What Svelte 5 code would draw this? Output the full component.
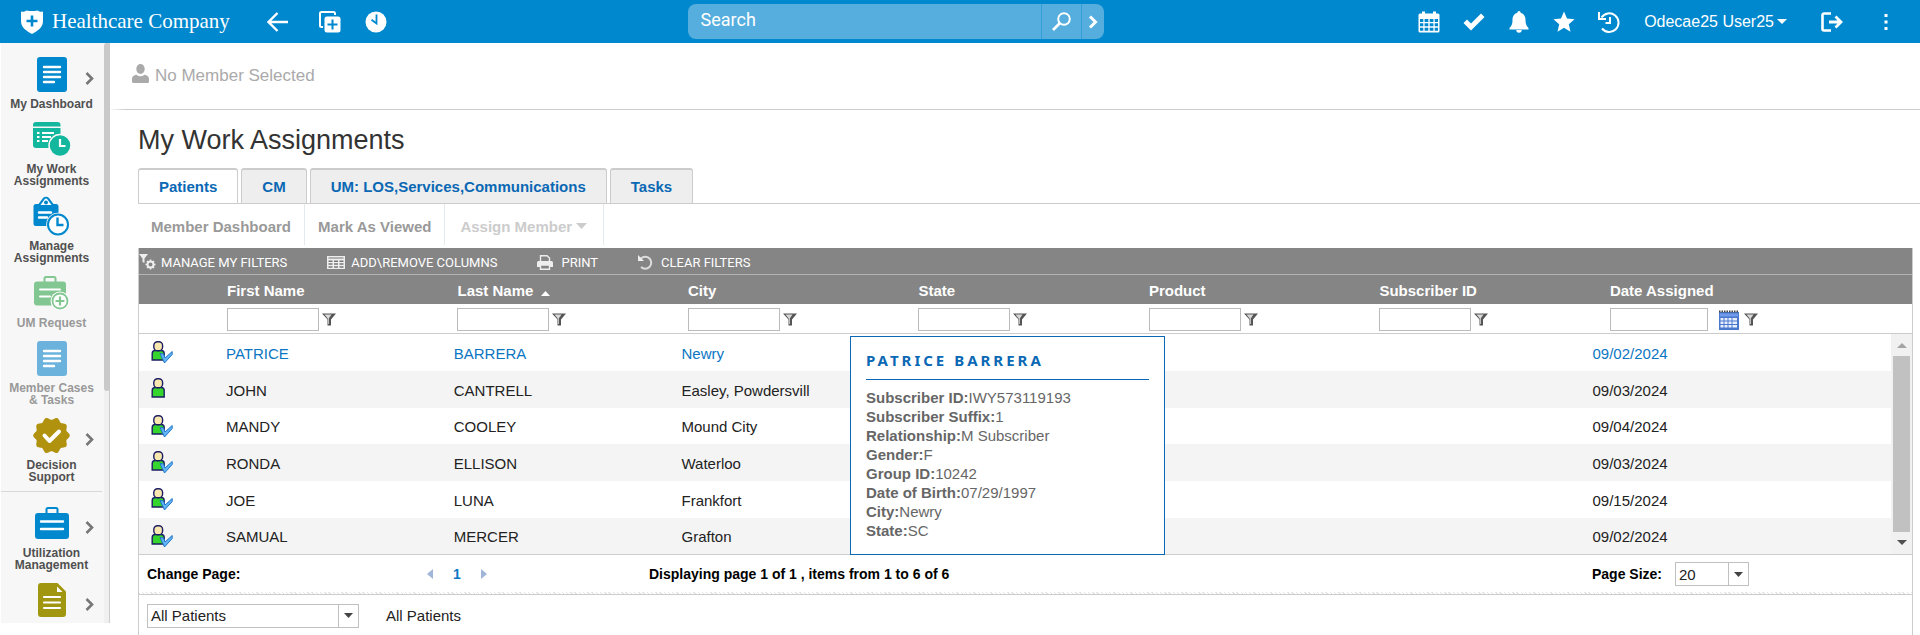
<script>
  const scallop = (() => {
    let d = '';
    for (let i = 0; i < 120; i++) {
      const t = (i / 120) * Math.PI * 2;
      const r = 17 + 1.3 * Math.cos(10 * t + Math.PI);
      d += (i ? 'L' : 'M') + (18.5 + r * Math.sin(t)).toFixed(2) + ' ' + (18.5 - r * Math.cos(t)).toFixed(2);
    }
    return d + 'Z';
  })();

  const nav = [
    { icon: 'doc', lines: ['My Dashboard'], more: true },
    { icon: 'work', lines: ['My Work', 'Assignments'] },
    { icon: 'manage', lines: ['Manage', 'Assignments'] },
    { icon: 'request', lines: ['UM Request'], dim: true },
    { icon: 'docdim', lines: ['Member Cases', '& Tasks'], dim: true },
    { icon: 'badge', lines: ['Decision', 'Support'], more: true },
    { icon: 'case', lines: ['Utilization', 'Management'], more: true, divided: true },
    { icon: 'note', lines: [], name: 'Documents', more: true }
  ];

  const tabs = ['Patients', 'CM', 'UM: LOS,Services,Communications', 'Tasks'];
  let active = $state(0);

  const columns = ['First Name', 'Last Name', 'City', 'State', 'Product', 'Subscriber ID', 'Date Assigned'];

  const rows = [
    { first: 'PATRICE', last: 'BARRERA', city: 'Newry', date: '09/02/2024', checked: true, current: true },
    { first: 'JOHN', last: 'CANTRELL', city: 'Easley, Powdersvill', date: '09/03/2024', checked: false },
    { first: 'MANDY', last: 'COOLEY', city: 'Mound City', date: '09/04/2024', checked: true },
    { first: 'RONDA', last: 'ELLISON', city: 'Waterloo', date: '09/03/2024', checked: true },
    { first: 'JOE', last: 'LUNA', city: 'Frankfort', date: '09/15/2024', checked: true },
    { first: 'SAMUAL', last: 'MERCER', city: 'Grafton', date: '09/02/2024', checked: true }
  ];

  const details = [
    ['Subscriber ID', 'IWY573119193'],
    ['Subscriber Suffix', '1'],
    ['Relationship', 'M Subscriber'],
    ['Gender', 'F'],
    ['Group ID', '10242'],
    ['Date of Birth', '07/29/1997'],
    ['City', 'Newry'],
    ['State', 'SC']
  ];
</script>

{#snippet docIcon(color)}
  <svg width="30" height="35" viewBox="0 0 30 35">
    <rect width="30" height="35" rx="3" fill={color} />
    <path d="M7 10h16M7 15h16M7 20h16M7 25h10" stroke="#fff" stroke-width="2.4" stroke-linecap="round" />
  </svg>
{/snippet}

{#snippet navIcon(name)}
  {#if name === 'doc'}
    {@render docIcon('#0088ce')}
  {:else if name === 'docdim'}
    {@render docIcon('#6bb3dc')}
  {:else if name === 'work'}
    <svg width="38" height="34" viewBox="0 0 38 34">
      <path d="M0 4.5V3a3 3 0 0 1 3-3h21.500a3 3 0 0 1 3 3v1.500z" fill="#13b79e" />
      <path d="M0 6h27.500v20H3a3 3 0 0 1-3-3z" fill="#13b79e" />
      <path d="M4 11h2.500M4 15h2.500M4 19h2.500M9 11h12M9 15h9M9 19h6" stroke="#fff" stroke-width="1.800" />
      <circle cx="27" cy="23.500" r="11" fill="#13b79e" stroke="#f7f7f7" stroke-width="1.500" />
      <path d="M27 17v7h5.500" fill="none" stroke="#fff" stroke-width="2.200" />
    </svg>
  {:else if name === 'manage'}
    <svg width="37" height="40" viewBox="0 0 37 40">
      <path d="M3 8h2.500L10 2a4 4 0 0 1 6 0L20.500 8H23a2.500 2.500 0 0 1 2.500 2.500V30H3a2.500 2.500 0 0 1-2.500-2.500v-17A2.500 2.500 0 0 1 3 8z" fill="#0088ce" />
      <path d="M7.500 9l4-5.600a2 2 0 0 1 3 0l4 5.600z" fill="#fff" />
      <circle cx="13" cy="6.500" r="2" fill="#0088ce" />
      <path d="M6 16.500h12M6 21.500h8" stroke="#fff" stroke-width="2.400" stroke-linecap="round" />
      <circle cx="25" cy="28.500" r="11.800" fill="#f7f7f7" />
      <circle cx="25" cy="28.500" r="10" fill="#fff" stroke="#0088ce" stroke-width="2" />
      <path d="M24.500 21.500v7.500h6" fill="none" stroke="#0088ce" stroke-width="2.400" />
    </svg>
  {:else if name === 'request'}
    <svg width="35" height="34" viewBox="0 0 35 34">
      <path d="M10.500 6V2.500a1.500 1.500 0 0 1 1.500-1.500h8a1.500 1.500 0 0 1 1.500 1.500V6" fill="none" stroke="#82c792" stroke-width="2" />
      <rect y="5.500" width="32" height="24" rx="3" fill="#82c792" />
      <path d="M6 13.500h20M6 20.500h10" stroke="#fff" stroke-width="2" stroke-linecap="round" />
      <circle cx="26" cy="25" r="9.500" fill="#fff" />
      <circle cx="26" cy="25" r="7.500" fill="#fff" stroke="#82c792" stroke-width="1.800" />
      <path d="M26 20.500v9M21.500 25h9" stroke="#82c792" stroke-width="2.200" />
    </svg>
  {:else if name === 'badge'}
    <svg width="37" height="37" viewBox="0 0 37 37">
      <path d={scallop} fill="#b0920f" />
      <path d="M11.500 18.500l5 5.500 9.500-9.500" fill="none" stroke="#fff" stroke-width="4" stroke-linecap="round" stroke-linejoin="round" />
    </svg>
  {:else if name === 'case'}
    <svg width="34" height="32" viewBox="0 0 34 32">
      <path d="M11.500 6V2.500a1.500 1.500 0 0 1 1.500-1.500h8a1.500 1.500 0 0 1 1.500 1.500V6" fill="none" stroke="#0088ce" stroke-width="2" />
      <rect y="6" width="34" height="26" rx="3" fill="#0088ce" />
      <path d="M6 14.500h22M6 22h22" stroke="#fff" stroke-width="2.400" stroke-linecap="round" />
    </svg>
  {:else}
    <svg width="28" height="34" viewBox="0 0 28 34">
      <path d="M3 0h16.500L28 8.500V31a3 3 0 0 1-3 3H3a3 3 0 0 1-3-3V3a3 3 0 0 1 3-3z" fill="#a0960f" />
      <path d="M19 3.500v5.500h5.500z" fill="#fff" />
      <path d="M6 14h16M6 19.500h16M6 25h16" stroke="#fff" stroke-width="2.200" stroke-linecap="round" />
    </svg>
  {/if}
{/snippet}

{#snippet funnel()}
  <svg width="14" height="13" viewBox="0 0 14 13">
    <path d="M0 .500h14L9 6.500V12.500H5.500V6.500z" fill="#555" />
    <path d="M2.500 1.500h7L6.800 5.500v5.500H6V6z" fill="#d8d8d8" />
  </svg>
{/snippet}

<div class="page">
  <header class="top">
    <a class="brand" href="#home">
      <svg width="22" height="24" viewBox="0 0 22 24">
        <path d="M0 1.500Q3 2.200 5.500 0.500Q11 1.500 16.500 0.500Q19 2.200 22 1.500V11C22 17.500 17 20.500 11 24C5 20.500 0 17.500 0 11z" fill="#fff" />
        <path d="M11 5.500v11M5.500 11h11" stroke="#0088ce" stroke-width="2.600" />
      </svg>
      <span>Healthcare Company</span>
    </a>
    <div class="quick">
      <button aria-label="Back">
        <svg width="22" height="22" viewBox="0 0 22 22"><path d="M10.500 2L1.500 11l9 9M2 11h19" fill="none" stroke="#fff" stroke-width="2.400" /></svg>
      </button>
      <button aria-label="New window">
        <svg width="22" height="22" viewBox="0 0 22 22">
          <path d="M4 16H2.500A1.500 1.500 0 0 1 1 14.500v-12A1.500 1.500 0 0 1 2.500 1h12A1.500 1.500 0 0 1 16 2.500V4" fill="none" stroke="#fff" stroke-width="2" />
          <rect x="5.500" y="5.500" width="16" height="16" rx="2.500" fill="#fff" />
          <path d="M13.500 8.500v10M8.500 13.500h10" stroke="#0088ce" stroke-width="2" />
        </svg>
      </button>
      <button aria-label="Recent">
        <svg width="22" height="22" viewBox="0 0 22 22">
          <circle cx="11" cy="11" r="10.500" fill="#fff" />
          <path d="M11.500 3.500v9L6.500 8.800" fill="none" stroke="#0088ce" stroke-width="1.800" />
        </svg>
      </button>
    </div>
    <div class="search">
      <input type="text" placeholder="Search" aria-label="Search" />
      <button class="find" aria-label="Run search">
        <svg width="19" height="19" viewBox="0 0 19 19"><circle cx="12" cy="7" r="5.800" fill="none" stroke="#fff" stroke-width="2" /><path d="M8 11l-7 7" stroke="#fff" stroke-width="2.600" /></svg>
      </button>
      <button class="adv" aria-label="Advanced search">
        <svg width="10" height="14" viewBox="0 0 10 14"><path d="M2 1.500L7.500 7 2 12.500" fill="none" stroke="#fff" stroke-width="3" /></svg>
      </button>
    </div>
    <div class="tools">
      <button aria-label="Calendar">
        <svg width="22" height="22" viewBox="0 0 22 22">
          <path d="M2 2.500h2V.500h3v2h8V.500h3v2h2a1.500 1.500 0 0 1 1.500 1.500v16a1.500 1.500 0 0 1-1.500 1.500H2A1.500 1.500 0 0 1 .500 20V4A1.500 1.500 0 0 1 2 2.500z" fill="#fff" />
          <path d="M2 8h3.300v3H2zM6.600 8h3.700v3H6.600zM11.700 8h3.700v3h-3.700zM16.700 8H20v3h-3.300zM2 12.300h3.300v3H2zM6.600 12.300h3.700v3H6.600zM11.700 12.300h3.700v3h-3.700zM16.700 12.300H20v3h-3.300zM2 16.800h3.300v3H2zM6.600 16.800h3.700v3H6.600zM11.700 16.800h3.700v3h-3.700zM16.700 16.800H20v3h-3.300z" fill="#0088ce" />
        </svg>
      </button>
      <button aria-label="Tasks done">
        <svg width="22" height="22" viewBox="0 0 22 22"><path d="M.500 12l3.500-3.500 4 4L18 2.500 21.500 6 8 19.500z" fill="#fff" /></svg>
      </button>
      <button aria-label="Notifications">
        <svg width="22" height="22" viewBox="0 0 22 22">
          <path d="M11 0a1.600 1.600 0 0 1 1.600 1.700C16 2.500 17.500 5.500 17.500 9c0 4 1 6 3 8v1.500H1.500V17c2-2 3-4 3-8 0-3.500 1.500-6.500 4.900-7.300A1.600 1.600 0 0 1 11 0z" fill="#fff" />
          <path d="M8.300 19h5.400a2.700 2.700 0 0 1-5.400 0z" fill="#fff" />
        </svg>
      </button>
      <button aria-label="Favorites">
        <svg width="22" height="22" viewBox="0 0 22 22"><path d="M11 .500l3 7 7.500.700-5.700 5 1.700 7.500L11 16.800l-6.500 3.900 1.700-7.500-5.700-5L8 7.500z" fill="#fff" /></svg>
      </button>
      <button aria-label="History">
        <svg width="22" height="22" viewBox="0 0 22 22">
          <path d="M3.500 6.500A9.300 9.300 0 1 1 4 17.500" fill="none" stroke="#fff" stroke-width="2" />
          <path d="M1 1v7h7" fill="none" stroke="#fff" stroke-width="2" />
          <path d="M12 6v6H7.500" fill="none" stroke="#fff" stroke-width="2" />
        </svg>
      </button>
    </div>
    <button class="user">Odecae25 User25<svg width="10" height="5" viewBox="0 0 10 5"><path d="M0 0h10L5 5z" fill="#fff" /></svg></button>
    <button class="exit" aria-label="Sign out">
      <svg width="22" height="20" viewBox="0 0 22 20">
        <path d="M10 1.500H3A1.500 1.500 0 0 0 1.500 3v14A1.500 1.500 0 0 0 3 18.500h7" fill="none" stroke="#fff" stroke-width="2.600" />
        <path d="M8 10h12M14.500 4.500L20 10l-5.500 5.500" fill="none" stroke="#fff" stroke-width="2.800" />
      </svg>
    </button>
    <button class="dots" aria-label="More">
      <svg width="4" height="18" viewBox="0 0 4 18"><path d="M.500 1h3v3h-3zM.500 7.500h3v3h-3zM.500 14h3v3h-3z" fill="#fff" /></svg>
    </button>
  </header>

  <div class="body">
    <nav class="side">
      <div class="items">
        {#each nav as item}
          {#if item.divided}<hr />{/if}
          <a class="item" class:dim={item.dim} href="#nav" aria-label={item.name}>
            <span class="pic">
              {@render navIcon(item.icon)}
              {#if item.more}
                <svg class="more" width="9" height="13" viewBox="0 0 9 13"><path d="M1.500 1L7 6.500 1.500 12" fill="none" stroke="#777" stroke-width="2.600" /></svg>
              {/if}
            </span>
            {#each item.lines as line}<span class="label">{line}</span>{/each}
          </a>
        {/each}
      </div>
      <div class="rail"><div class="railthumb"></div></div>
    </nav>

    <main>
      <div class="member">
        <svg width="17" height="19" viewBox="0 0 17 19">
          <ellipse cx="8.500" cy="5" rx="4.200" ry="5" fill="#aaa" />
          <path d="M0 17.500V15c0-2.500 2-4 4.500-4.300a6 6 0 0 0 8 0C15 11 17 12.500 17 15v2.500a1.500 1.500 0 0 1-1.500 1.500h-14A1.500 1.500 0 0 1 0 17.500z" fill="#aaa" />
        </svg>
        <span>No Member Selected</span>
      </div>

      <div class="content">
        <h1>My Work Assignments</h1>
        <div class="tabs" role="tablist">
          {#each tabs as tab, i}
            <button role="tab" class:on={active === i} aria-selected={active === i} onclick={() => (active = i)}>{tab}</button>
          {/each}
        </div>
        <div class="actions">
          <button>Member Dashboard</button>
          <button>Mark As Viewed</button>
          <button class="off">Assign Member<svg width="11" height="6" viewBox="0 0 11 6"><path d="M0 0h11L5.500 6z" fill="#ccc" /></svg></button>
        </div>

        <section class="grid">
          <div class="bar">
            <button class="manage">
              <svg width="17" height="17" viewBox="0 0 17 17">
                <path d="M0 0h9L5.500 4.500V9L3.500 8V4.500z" fill="#eee" />
                <circle cx="11.500" cy="10.500" r="3" fill="none" stroke="#eee" stroke-width="2" />
                <path d="M11.500 5.500v2M11.500 13.500v2M6.500 10.500h2M14.500 10.500h2M8 7l1.400 1.400M13.600 12.600L15 14M15 7l-1.400 1.400M9.400 12.600L8 14" stroke="#eee" stroke-width="1.600" />
              </svg>MANAGE MY FILTERS
            </button>
            <button>
              <svg width="18" height="13" viewBox="0 0 18 13">
                <path d="M0 0h18v13H0z" fill="#eee" />
                <path d="M1.500 4.500h4v1.500h-4zM7 4.500h4v1.500H7zM12.500 4.500h4v1.500h-4zM1.500 7.300h4v1.500h-4zM7 7.300h4v1.500H7zM12.500 7.300h4v1.500h-4zM1.500 10.200h4v1.500h-4zM7 10.200h4v1.500H7zM12.500 10.200h4v1.500h-4z" fill="#777" />
                <path d="M1.500 2h15" stroke="#777" stroke-width="1" />
              </svg>ADD\REMOVE COLUMNS
            </button>
            <button class="print">
              <svg width="16" height="15" viewBox="0 0 16 15">
                <path d="M3.500 6V.800h6.500L12.500 3v3" fill="none" stroke="#eee" stroke-width="1.400" />
                <path d="M1.500 6h13A1.500 1.500 0 0 1 16 7.500V12H0V7.500A1.500 1.500 0 0 1 1.500 6z" fill="#eee" />
                <path d="M3.500 10h9v4.300h-9z" fill="#858585" stroke="#eee" stroke-width="1.400" />
              </svg>PRINT
            </button>
            <button class="clear">
              <svg width="15" height="15" viewBox="0 0 15 15">
                <path d="M2.500 4.500H9a4.800 4.800 0 1 1-4.500 6.500" fill="none" stroke="none" />
                <path d="M3 3.500A6 6 0 1 1 3 12" fill="none" stroke="#ddd" stroke-width="2" />
                <path d="M0 0v6h6z" fill="#eee" />
              </svg>CLEAR FILTERS
            </button>
          </div>

          <table class="head">
            <colgroup><col class="lead" />{#each Array(6) as _}<col class="mid" />{/each}<col /></colgroup>
            <thead>
              <tr>
                <th aria-label="Status"></th>
                {#each columns as c}
                  <th scope="col">{c}{#if c === 'Last Name'}<svg class="sort" width="9" height="5" viewBox="0 0 9 5"><path d="M0 5h9L4.500 0z" fill="#fff" /></svg>{/if}</th>
                {/each}
              </tr>
              <tr class="filters">
                <td></td>
                {#each columns as c, i}
                  <td>
                    <div class="filter">
                      <input class:wide={i === 6} type="text" aria-label={'Filter ' + c} />
                      {#if i === 6}
                        <button class="cal" aria-label="Pick date">
                          <svg width="20" height="20" viewBox="0 0 20 20">
                            <path d="M0 2h20v18H0z" fill="#4a78cc" />
                            <path d="M0 1.500h20" stroke="#444" stroke-width="2" stroke-dasharray="1.500 1" />
                            <path d="M1 3.500h18v3H1z" fill="#6f9bea" />
                            <path d="M1.500 8h3v2.500h-3zM5.500 8h3v2.500h-3zM9.500 8h3v2.500h-3zM13.500 8h4.500v2.500h-4.500zM1.500 11.500h3V14h-3zM5.500 11.500h3V14h-3zM9.500 11.500h3V14h-3zM13.500 11.500h4.500V14h-4.500zM1.500 15h3v2.500h-3zM5.500 15h3v2.500h-3zM9.500 15h3v2.500h-3zM13.500 15h4.500v2.500h-4.500z" fill="#e8f0ff" />
                          </svg>
                        </button>
                      {/if}
                      <button aria-label={'Filter options for ' + c}>{@render funnel()}</button>
                    </div>
                  </td>
                {/each}
              </tr>
            </thead>
          </table>

          <div class="scroller">
            <table class="data">
              <colgroup><col class="lead" />{#each Array(6) as _}<col class="mid" />{/each}<col /></colgroup>
              <tbody>
                {#each rows as r}
                  <tr class:current={r.current}>
                    <td class="who">
                      <svg width="22" height="24" viewBox="0 0 22 24">
                        <path d="M1.200 20v-6.500q0-3 3-3h6q3 0 3 3V20z" fill="#35d52d" stroke="#1d1d63" stroke-width="1.400" />
                        <rect x="2.800" y="1.700" width="8.800" height="9" rx="3.800" fill="#f8e8b0" stroke="#1d1d63" stroke-width="1.400" />
                        {#if r.checked}
                          <path d="M9 13.500l3.500.500 1.500 4 7.200-6.500v3L13.500 23z" fill="#63b4f5" stroke="#1f76c8" stroke-width="1" />
                        {/if}
                      </svg>
                    </td>
                    <td>{r.first}</td>
                    <td>{r.last}</td>
                    <td>{r.city}</td>
                    <td></td>
                    <td></td>
                    <td></td>
                    <td>{r.date}</td>
                  </tr>
                {/each}
              </tbody>
            </table>
            <div class="vbar">
              <svg width="10" height="5" viewBox="0 0 10 5"><path d="M0 5h10L5 0z" fill="#a3a3a3" /></svg>
              <div class="vthumb"></div>
              <svg width="10" height="5" viewBox="0 0 10 5"><path d="M0 0h10L5 5z" fill="#505050" /></svg>
            </div>
            <aside class="card">
              <h2>PATRICE BARRERA</h2>
              {#each details as [k, v]}<div><b>{k}:</b>{v}</div>{/each}
            </aside>
          </div>

          <div class="pager">
            <b class="change">Change Page:</b>
            <div class="pages">
              <button aria-label="Previous page"><svg width="6" height="10" viewBox="0 0 6 10"><path d="M6 0v10L0 5z" fill="#9fb6d8" /></svg></button>
              <a href="#page">1</a>
              <button aria-label="Next page"><svg width="6" height="10" viewBox="0 0 6 10"><path d="M0 0v10l6-5z" fill="#9fb6d8" /></svg></button>
            </div>
            <b class="count">Displaying page 1 of 1 , items from 1 to 6 of 6</b>
            <label class="size"><b>Page Size:</b>
              <span class="pick small"><select><option>20</option></select><i><svg width="9" height="5" viewBox="0 0 9 5"><path d="M0 0h9L4.500 5z" fill="#444" /></svg></i></span>
            </label>
          </div>

          <div class="views">
            <span class="pick"><select aria-label="View"><option>All Patients</option></select><i><svg width="9" height="5" viewBox="0 0 9 5"><path d="M0 0h9L4.500 5z" fill="#444" /></svg></i></span>
            <span>All Patients</span>
          </div>
        </section>
      </div>
    </main>
  </div>
</div>

<style>
  .page, .page * { box-sizing: border-box; }
  .page {
    height: 100vh;
    overflow: hidden;
    display: flex;
    flex-direction: column;
    background: #fff;
    font: 15px "Liberation Sans", Arial, sans-serif;
    color: #222;
  }
  button { font: inherit; color: inherit; background: none; border: 0; padding: 0; display: flex; align-items: center; cursor: pointer; }
  a { color: inherit; text-decoration: none; }
  svg { display: block; flex: none; overflow: visible; }

  .top { flex: none; height: 43px; background: #0088ce; color: #fff; display: flex; align-items: center; padding: 0 32px 0 21px; }
  .brand { display: flex; align-items: center; gap: 9px; width: 246px; font: 21px "Liberation Serif", "Times New Roman", serif; white-space: nowrap; }
  .quick { display: flex; gap: 24px; align-items: center; }
  .quick button:first-child { margin-right: 6px; }
  .search { width: 416px; height: 35px; margin: 0 auto; border-radius: 8px; background: #55aedd; display: flex; overflow: hidden; }
  .search input { flex: 1; min-width: 0; border: 0; outline: 0; background: none; padding: 0 13px 4px; font: 18px Roboto, sans-serif; color: #fff; }
  .search input::placeholder { color: #fff; opacity: 1; }
  .search button { justify-content: center; border-left: 1px solid #2f9fd8; }
  .find { width: 40px; }
  .adv { width: 23px; }
  .tools { display: flex; gap: 23px; margin-left: 14px; }
  .user { font-size: 16px; gap: 3px; margin-left: 24px; }
  .exit { margin-left: 34px; }
  .dots { margin-left: 41px; }

  .body { flex: 1; min-height: 0; display: flex; }
  .side { flex: none; width: 110px; margin-bottom: 12px; padding-left: 1px; display: flex; overflow: hidden; }
  .items { flex: 1; overflow: hidden; background: #f7f7f7; padding: 13px 2px 0 0; }
  .item { display: flex; flex-direction: column; align-items: center; padding-bottom: 11px; font: bold 12px/12px "Liberation Sans", Arial, sans-serif; color: #505050; }
  .item.dim { color: #999; }
  .pic { position: relative; width: 100%; height: 36px; margin-bottom: 6px; display: flex; align-items: center; justify-content: center; }
  .more { position: absolute; right: 8px; top: 16px; }
  hr { border: 0; border-top: 1px solid #d8d8d8; margin: -3px 0 13px 0; }
  .rail { width: 6px; background: #f0f0f0; border-right: 1px solid #ccc; }
  .railthumb { height: 60%; width: 6px; background: #c9c9c9; border-radius: 3px; }

  main { flex: 1; min-width: 0; display: flex; flex-direction: column; }
  .member { flex: none; height: 67px; padding: 0 22px 5px; display: flex; align-items: center; gap: 6px; font-size: 17px; color: #aaa; border-bottom: 1px solid; border-image: linear-gradient(90deg, #fff, #ccc 16px) 1; }
  .member span { padding-top: 4px; }
  .content { flex: 1; min-height: 0; padding-left: 28px; display: flex; flex-direction: column; }
  h1 { margin: 0; padding: 15px 0 12px; font: 27px/31px "Liberation Sans", Arial, sans-serif; color: #333; }
  .tabs { flex: none; display: flex; gap: 3px; border-bottom: 1px solid #ccc; }
  .tabs button { height: 35px; padding: 0 20px; font-weight: bold; color: #0a68b4; background: #eee; border: 1px solid #ccc; border-top-width: 2px; border-bottom: 0; border-radius: 3px 3px 0 0; }
  .tabs button.on { background: #fff; }
  .actions { flex: none; display: flex; height: 44px; padding-bottom: 3px; }
  .actions button { padding: 3px 13px 0; font-weight: bold; color: #999; border-right: 1px solid #e2eaee; }
  .actions button.off { color: #ccc; gap: 4px; padding: 3px 16px 0 15px; }

  .grid { flex: 1; margin-right: 7px; border: solid #ccc; border-width: 0 1px; display: flex; flex-direction: column; }
  .bar { flex: none; height: 27px; padding-top: 3px; display: flex; align-items: center; background: #858585; border-bottom: 1px solid #b4b4b4; color: #fff; font: 13px Roboto, "Liberation Sans", sans-serif; }
  .bar button { gap: 6px; margin-right: 40px; white-space: nowrap; }
  .bar .manage { gap: 5px; }
  .bar .print, .bar .clear { gap: 8px; }
  table { border-collapse: collapse; table-layout: fixed; width: 100%; }
  .lead { width: 77px; }
  .mid { width: 13%; }
  th { height: 29px; padding: 2px 0 0 11px; text-align: left; background: #858585; color: #fff; white-space: nowrap; }
  .sort { display: inline-block; margin-left: 8px; vertical-align: 0; }
  td { padding: 0 0 0 11px; }
  .head { flex: none; }
  .filters td { height: 29px; padding-top: 3px; border-bottom: 1px solid #ccc; }
  .filter { display: flex; align-items: center; gap: 3px; }
  .filter input { width: 92px; height: 23px; border: 1px solid #bbb; padding: 0 4px; font: inherit; }
  .filter input.wide { width: 98px; }
  .filter .cal { margin: 0 2px 0 8px; }
  .scroller { position: relative; display: flex; border-bottom: 1px solid #ccc; }
  .data { flex: 1; min-width: 0; }
  .data tr { height: 37px; }
  .data tr:nth-child(3n) { height: 36px; }
  .data tr:nth-child(even) { background: #f4f4f4; }
  .data .current { color: #0c76c3; }
  .data td { padding: 2px 0 0 10px; white-space: nowrap; }
  .data .who { padding: 0 0 0 12px; }
  .vbar { width: 21px; background: #f1f1f1; display: flex; flex-direction: column; align-items: center; padding: 9px 2px; gap: 8px; }
  .vthumb { flex: 1; width: 100%; background: #c1c1c1; }
  .card { position: absolute; left: 711px; top: 2px; width: 315px; height: 219px; padding: 13px 15px; background: #fff; border: 1px solid #0a68b4; color: #666; line-height: 19px; }
  .card h2 { margin: 0 0 8px; padding-bottom: 9px; border-bottom: 1px solid #0a68b4; font: bold 15px/20px "Noto Sans", sans-serif; letter-spacing: 3px; color: #0a68b4; }

  .pager { flex: none; height: 40px; padding: 0 163px 0 8px; display: flex; align-items: center; border-bottom: 1px solid #ccc; font-size: 14px; color: #000; background: repeating-linear-gradient(45deg, #e4e4e4 0 1px, #fff 1px 3px) bottom / 100% 2px no-repeat; }
  .change { width: 280px; }
  .pages { width: 222px; display: flex; align-items: center; gap: 20px; }
  .pages a { font-weight: bold; color: #0c76c3; }
  .size { margin-left: auto; display: flex; align-items: center; gap: 13px; }
  .pick { position: relative; display: flex; width: 212px; height: 24px; border: 1px solid #c0c0c0; background: #fff; }
  .pick.small { width: 74px; }
  .pick select { flex: 1; min-width: 0; appearance: none; border: 0; outline: 0; background: none; padding: 0 3px; font: 15px "Liberation Sans", Arial, sans-serif; color: #222; }
  .pick i { width: 20px; border-left: 1px solid #c0c0c0; display: flex; align-items: center; justify-content: center; pointer-events: none; }
  .views { flex: none; display: flex; align-items: center; gap: 27px; padding: 9px 8px; }
</style>
